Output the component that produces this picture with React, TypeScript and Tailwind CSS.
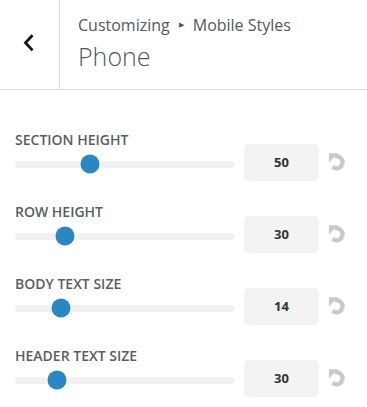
import React from "react";

const rows = [
  { label: "SECTION HEIGHT", value: 50, thumb: 75 },
  { label: "ROW HEIGHT", value: 30, thumb: 50 },
  { label: "BODY TEXT SIZE", value: 14, thumb: 45.5 },
  { label: "HEADER TEXT SIZE", value: 30, thumb: 41.5 },
];

function ResetIcon() {
  return (
    <svg width="20" height="20" viewBox="0 0 20 20" className="block">
      <path d="M6.6 4.6 A6 6 0 1 1 4.6 14.8" fill="none" stroke="#c9c9cb" strokeWidth="4.2" />
      <polygon points="1,1.2 10.4,1.2 1,10.6" fill="#c9c9cb" />
    </svg>
  );
}

export default function App() {
  return (
    <div
      className="w-[367px] h-[407px] bg-white overflow-hidden text-[#50575e]"
      style={{ fontFamily: '"Open Sans", "Noto Sans", sans-serif' }}
    >
      <div className="flex h-[90px] border-b border-[#dcdcde]">
        <div className="w-[60px] border-r border-[#dcdcde] flex items-center justify-center">
          <svg width="20" height="20" viewBox="0 0 20 20" className="block mb-[4px] mr-[2px]">
            <polyline points="13.5,2.2 6.5,9.8 13.5,17.4" fill="none" stroke="#111" strokeWidth="2.8" />
          </svg>
        </div>
        <div className="pl-[18px] pt-[13px]">
          <div className="text-[16px] leading-[22px] flex items-center">
            <span>Customizing</span>
            <span className="text-[7px] mx-[9px] mt-[1px]">▶</span>
            <span>Mobile Styles</span>
          </div>
          <div className="text-[25px] font-light leading-[34px] mt-[3px]">Phone</div>
        </div>
      </div>
      <div className="pt-[40px] pl-[15px] pr-[19px]">
        {rows.map((r, i) => (
          <div key={i} className="mb-[21px]">
            <div className="text-[14px] leading-[20px] font-semibold text-[#585e64]">{r.label}</div>
            <div className="flex items-center h-[37px] mt-[-6px]">
              <div className="relative flex-1 h-[7px] mt-[3px] rounded-full bg-[#f1f1f2]">
                <div
                  className="absolute top-1/2 w-[19px] h-[19px] -translate-x-1/2 -translate-y-1/2 rounded-full bg-[#2b86c1]"
                  style={{ left: `${r.thumb}px` }}
                />
              </div>
              <div className="ml-[10px] w-[75px] h-[37px] rounded-[5px] bg-[#f3f3f4] flex items-center justify-center text-[13px] font-bold text-[#2c3338]">
                {r.value}
              </div>
              <div className="ml-[9px] mt-[-2px]">
                <ResetIcon />
              </div>
            </div>
          </div>
        ))}
      </div>
    </div>
  );
}
